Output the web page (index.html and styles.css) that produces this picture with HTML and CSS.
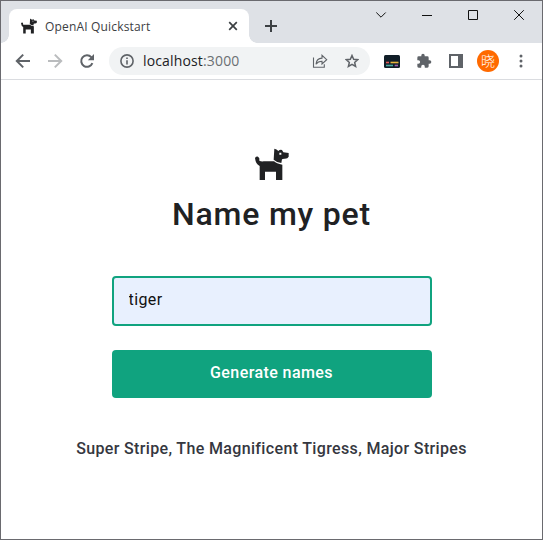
FILE: index.html
```html
<!DOCTYPE html>
<html lang="en">
<head>
<meta charset="utf-8">
<title>OpenAI Quickstart</title>
<link rel="stylesheet" href="styles.css">
</head>
<body>
<svg class="defs" width="0" height="0" aria-hidden="true">
  <symbol id="dog" viewBox="46 24 102 96">
    <path d="M46 54Q49 49 55 50Q61 53 59 62Q64 65 72 64H103Q110 71 128 74V120H109V95H76V120H60V78Q48 73 46 54Z"/>
    <path fill-rule="evenodd" d="M104 26Q111 27 116 33Q121 28 127 30L131 37L147 39V50Q144 57 133 56L127 58L125 69Q110 67 102 59ZM119 38V44H125V38Z"/>
  </symbol>
</svg>
<div class="window">
  <header class="tabs">
    <div class="tab">
      <svg class="favicon"><use href="#dog"/></svg>
      <span class="tab-title">OpenAI Quickstart</span>
      <svg class="close" viewBox="0 0 10 10"><path d="M1.2 1.2l7.6 7.6M8.8 1.2L1.2 8.8"/></svg>
    </div>
    <svg class="plus" viewBox="0 0 12 12"><path d="M6 0v12M0 6h12"/></svg>
    <div class="controls">
      <svg viewBox="0 0 12 12"><path d="M1.3 3.5L6 8.2l4.700-4.700"/></svg>
      <svg viewBox="0 0 12 12"><path d="M1 6.5h10"/></svg>
      <svg viewBox="0 0 12 12"><path d="M1.5 1.5h9v9h-9z"/></svg>
      <svg viewBox="0 0 12 12"><path d="M1.2 1.2l9.6 9.6M10.8 1.2L1.2 10.8"/></svg>
    </div>
  </header>
  <nav class="toolbar">
    <svg class="nav back" viewBox="0 0 16 16"><path d="M15 8H2M8.2 1.6L1.8 8l6.4 6.4"/></svg>
    <svg class="nav forward" viewBox="0 0 16 16"><path d="M1 8h13M7.8 1.6L14.2 8l-6.4 6.4"/></svg>
    <svg class="nav reload" viewBox="0 0 16 16"><path d="M13.4 10.2A5.8 5.8 0 1 1 12.3 4.1L14 5.8"/><path class="solid" d="M15 1v6.2H8.8z"/></svg>
    <div class="address">
      <svg class="info" viewBox="0 0 14 14"><circle cx="7" cy="7" r="6.1"/><path d="M7 6.2v4.2M7 3.5v1.6"/></svg>
      <span class="url">localhost<span class="port">:3000</span></span>
      <svg class="share" viewBox="0 0 16 14"><path d="M1.5 3.5v9.8h10.8v-3M4 10.2C4.3 6.2 6.5 4.2 10 4.1V1.3L14.7 5.7 10 9.9V7.2C7.2 7.2 5.3 8.2 4 10.2Z"/></svg>
      <svg class="star" viewBox="0 0 14 14"><path d="M7 1.5l1.65 3.8 4.1.35-3.1 2.75.95 4.05L7 10.3l-3.6 2.15.95-4.05-3.1-2.75 4.1-.35z"/></svg>
    </div>
    <svg class="ext" viewBox="0 0 16 13"><rect width="16" height="13" rx="1.5" fill="#111e28"/><path d="M2 7.500h3" stroke="#e45756" stroke-width="1.6"/><path d="M6.500 7.500h8" stroke="#e9b43c" stroke-width="1.6"/><path d="M2 10.500h7" stroke="#4aa8a0" stroke-width="1.6"/><path d="M10.700 10.500h3.300" stroke="#a05fb0" stroke-width="1.6"/></svg>
    <svg class="puzzle" viewBox="0 0 24 24"><path d="M20.5 11H19V7a2 2 0 0 0-2-2h-4V3.500a2.500 2.500 0 0 0-5 0V5H4a2 2 0 0 0-2 2v3.800h1.500a2.700 2.700 0 0 1 0 5.400H2V20a2 2 0 0 0 2 2h3.800v-1.500a2.700 2.700 0 0 1 5.400 0V22H17a2 2 0 0 0 2-2v-4h1.500a2.500 2.500 0 0 0 0-5z"/></svg>
    <svg class="panel" viewBox="0 0 14 14"><path fill-rule="evenodd" d="M0 0h14v14H0zM2 2v10h7V2z"/></svg>
    <span class="avatar">晓</span>
    <svg class="menu" viewBox="0 0 4 14"><circle cx="2" cy="2" r="1.5"/><circle cx="2" cy="7" r="1.5"/><circle cx="2" cy="12" r="1.5"/></svg>
  </nav>
  <main>
    <svg class="dog"><use href="#dog"/></svg>
    <h1>Name my pet</h1>
    <form>
      <input type="text" value="tiger" aria-label="Animal">
      <button type="button">Generate names</button>
    </form>
    <p class="result">Super Stripe, The Magnificent Tigress, Major Stripes</p>
  </main>
</div>
</body>
</html>
```
FILE: styles.css
```css
* { box-sizing: border-box; }
body { margin: 0; background: #fff; font-family: Roboto, sans-serif; }
svg { display: block; flex: none; }
.defs { position: absolute; }
.window { width: 543px; height: 540px; border: 1px solid #6a6a6f; overflow: hidden; }

.tabs { display: flex; height: 42px; background: #dee1e6; padding: 8px 0 0 8px; }
.tab { position: relative; display: flex; align-items: center; width: 240px; height: 34px; padding: 0 11px 0 12px; background: #fff; border-radius: 8px 8px 0 0; }
.tab::before, .tab::after { content: ""; position: absolute; bottom: 0; width: 8px; height: 8px; }
.tab::before { left: -8px; background: radial-gradient(circle at 0 0, transparent 7.5px, #fff 8px); }
.tab::after { right: -8px; background: radial-gradient(circle at 100% 0, transparent 7.5px, #fff 8px); }
.favicon { width: 16px; height: 16px; fill: #202123; }
.tab-title { margin: 2px 0 0 8px; font: 12px/16px "Open Sans", sans-serif; color: #3c4043; white-space: nowrap; letter-spacing: .17px; }
.close { width: 10px; height: 10px; margin-left: auto; stroke: #3c4043; stroke-width: 1.7; }
.plus { width: 12px; height: 12px; margin: 11px 0 0 16px; stroke: #3c4043; stroke-width: 2; }
.controls { display: flex; gap: 34px; margin-left: 98px; }
.controls svg { width: 12px; height: 12px; fill: none; stroke: #111; stroke-width: 1; }

.toolbar { display: flex; align-items: center; height: 37px; border-bottom: 1px solid #dadce0; padding-left: 14px; }
.nav { width: 16px; height: 16px; margin-right: 16px; fill: none; stroke: #5f6368; stroke-width: 2; }
.forward { stroke: #babcbe; }
.reload { margin-right: 14px; }
.reload .solid { fill: #5f6368; stroke: none; }
.address { display: flex; align-items: center; width: 261px; height: 28px; padding: 0 11px; border-radius: 14px; background: #f1f3f4; }
.address svg { fill: none; stroke: #5f6368; }
.info { width: 14px; height: 14px; stroke-width: 1.6; }
.url { margin-left: 9px; font: 14px/20px "Open Sans", sans-serif; color: #202124; white-space: nowrap; letter-spacing: .15px; }
.port { color: #6b6f73; }
.share { width: 16px; height: 14px; margin-left: auto; stroke-width: 1.1; }
.star { width: 14px; height: 14px; margin-left: 17px; stroke-width: 1.5; }
.ext { width: 16px; height: 13px; margin-left: 14px; }
.puzzle { width: 16px; height: 16px; margin-left: 16px; fill: #5f6368; }
.panel { width: 14px; height: 14px; margin-left: 17px; fill: #5f6368; }
.avatar { width: 22px; height: 22px; margin-left: 14px; border-radius: 50%; background: #ff6a00; color: #fff; font: 300 14px/21px "Noto Sans CJK SC", sans-serif; text-align: center; }
.menu { width: 4px; height: 14px; margin-left: 20px; fill: #5f6368; }

main { display: flex; flex-direction: column; align-items: center; padding-top: 68px; }
.dog { width: 34px; height: 32px; fill: #202123; }
h1 { margin: 14px 0 0; font-size: 32px; line-height: 40px; font-weight: 500; letter-spacing: .8px; color: #202123; white-space: nowrap; }
form { display: flex; flex-direction: column; width: 320px; gap: 24px; margin-top: 42px; }
input { height: 50px; padding: 0 15px 3px; border: 2px solid #10a37f; border-radius: 4px; outline: 0; background: #e8f0fe; color: #111; font: 16px Roboto, sans-serif; letter-spacing: .4px; }
button { height: 48px; padding: 0 0 3px; border: 0; border-radius: 4px; background: #10a37f; color: #fff; font: 500 16px Roboto, sans-serif; letter-spacing: .42px; }
.result { margin: 41px 0 0; font-size: 16px; line-height: 20px; font-weight: 500; letter-spacing: .35px; color: #353740; white-space: nowrap; }
```
